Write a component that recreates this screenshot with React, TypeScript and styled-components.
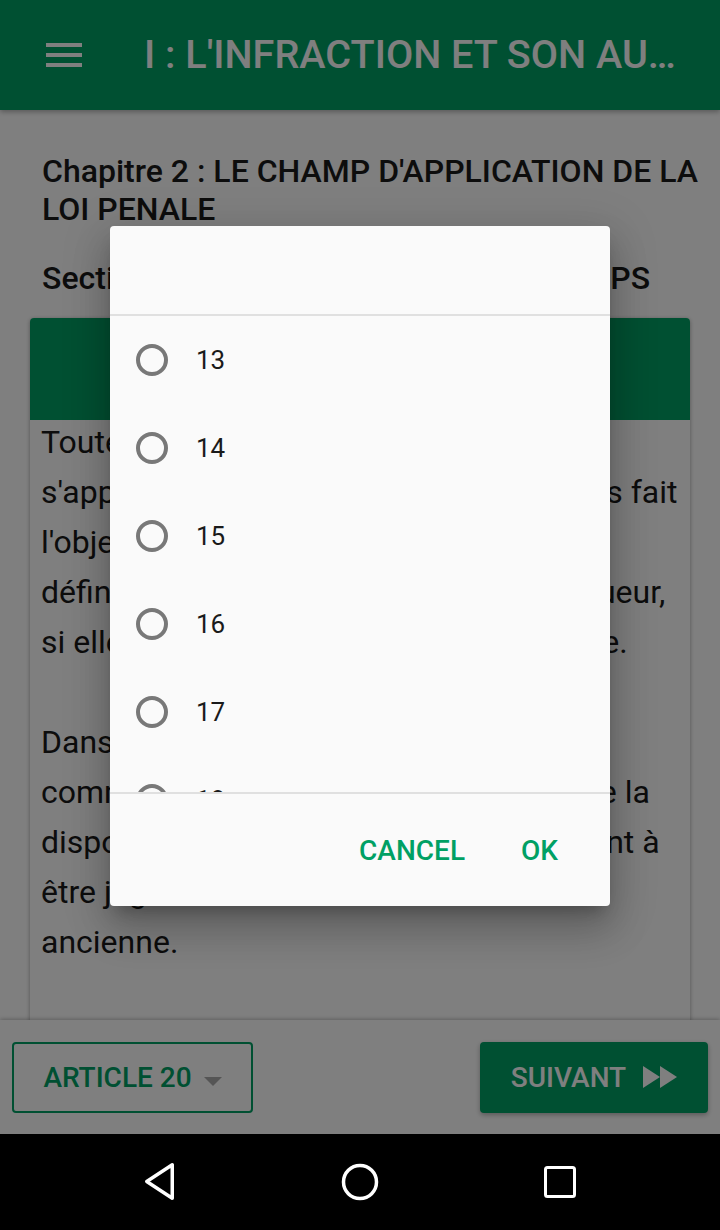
import React from "react";
import styled, { createGlobalStyle } from "styled-components";

const GlobalStyle = createGlobalStyle`
  html, body {
    margin: 0;
    padding: 0;
    background: #000;
  }
  * {
    box-sizing: border-box;
  }
`;

const GREEN = "#00a064";

const Screen = styled.div`
  position: relative;
  width: 720px;
  height: 1230px;
  display: flex;
  flex-direction: column;
  background: #fff;
  overflow: hidden;
  font-family: Roboto, "Noto Sans", Arial, sans-serif;
`;

const AppBar = styled.header`
  position: relative;
  z-index: 2;
  flex-shrink: 0;
  height: 110px;
  display: flex;
  align-items: center;
  gap: 62px;
  padding-left: 46px;
  background: ${GREEN};
  box-shadow: 0 2px 5px rgba(0, 0, 0, 0.3);
`;

const AppTitle = styled.h1`
  margin: -1px 0 0;
  color: #fff;
  font-size: 39.6px;
  font-weight: 500;
  white-space: nowrap;
`;

const Content = styled.main`
  flex: 1;
  min-height: 0;
  overflow: hidden;
  padding: 42px 30px 0;
`;

const Heading = styled.h2<{ $gap?: number }>`
  margin: ${(p) => p.$gap ?? 0}px -18px 0 0;
  padding-left: 12px;
  color: #1a1a1a;
  font-size: 32px;
  font-weight: 500;
  line-height: 38px;
`;

const Card = styled.section`
  margin-top: 21px;
  background: #fff;
  border-radius: 4px;
  overflow: hidden;
  box-shadow: 0 1px 4px rgba(0, 0, 0, 0.35);
`;

const CardHeader = styled.div`
  height: 102px;
  background: ${GREEN};
`;

const CardBody = styled.div`
  margin-top: -3px;
  padding: 0 11px 80px;
  color: #1a1a1a;
  font-size: 32px;
  line-height: 50px;
`;

const Line = styled.div`
  min-height: 50px;
  white-space: nowrap;
`;

const BottomBar = styled.footer`
  position: relative;
  z-index: 2;
  flex-shrink: 0;
  height: 114px;
  display: flex;
  align-items: center;
  justify-content: space-between;
  padding: 0 12px;
  background: #fff;
  box-shadow: 0 -1px 4px rgba(0, 0, 0, 0.25);
`;

const BarButton = styled.button<{ $filled?: boolean }>`
  height: 71px;
  width: ${(p) => (p.$filled ? 228 : 241)}px;
  display: flex;
  align-items: center;
  justify-content: center;
  gap: ${(p) => (p.$filled ? 17 : 12)}px;
  padding: 0;
  border-radius: 4px;
  border: 2px solid ${GREEN};
  background: ${(p) => (p.$filled ? GREEN : "transparent")};
  color: ${(p) => (p.$filled ? "#fff" : GREEN)};
  box-shadow: ${(p) => (p.$filled ? "0 2px 5px rgba(0,0,0,0.3)" : "none")};
  font-family: inherit;
  font-size: 28px;
  font-weight: 500;
`;

const NavBar = styled.nav`
  flex-shrink: 0;
  height: 96px;
  display: grid;
  grid-template-columns: repeat(3, 200px);
  justify-content: center;
  align-items: center;
  justify-items: center;
  background: #000;
`;

const Scrim = styled.div`
  position: absolute;
  top: 0;
  left: 0;
  z-index: 5;
  width: 720px;
  height: 1134px;
  display: flex;
  align-items: center;
  justify-content: center;
  padding-bottom: 2px;
  background: rgba(0, 0, 0, 0.5);
`;

const Dialog = styled.div`
  width: 500px;
  height: 680px;
  display: flex;
  flex-direction: column;
  background: #fafafa;
  border-radius: 4px;
  overflow: hidden;
  box-shadow: 0 24px 38px 3px rgba(0, 0, 0, 0.16),
    0 9px 46px 8px rgba(0, 0, 0, 0.12), 0 11px 15px -7px rgba(0, 0, 0, 0.25);
`;

const DialogTitle = styled.div`
  height: 90px;
  flex-shrink: 0;
  border-bottom: 2px solid #e0e0e0;
`;

const OptionList = styled.div`
  height: 478px;
  flex-shrink: 0;
  overflow: hidden;
  border-bottom: 2px solid #e0e0e0;
`;

const Option = styled.label`
  height: 88px;
  display: flex;
  align-items: center;
  gap: 28px;
  padding-left: 26px;
  color: #1a1a1a;
  font-size: 26px;
`;

const Radio = styled.span`
  width: 32px;
  height: 32px;
  flex-shrink: 0;
  border-radius: 50%;
  border: 4px solid #787878;
`;

const Actions = styled.div`
  flex: 1;
  display: flex;
  align-items: center;
  justify-content: flex-end;
  gap: 56px;
  padding: 0 52px 0 0;
`;

const ActionButton = styled.button`
  padding: 0;
  border: none;
  background: none;
  color: ${GREEN};
  font-family: inherit;
  font-size: 28px;
  font-weight: 500;
`;

const MenuIcon = () => (
  <svg width="36" height="24" viewBox="0 0 36 24">
    <rect x="0" y="0" width="36" height="4" fill="#fff" />
    <rect x="0" y="10" width="36" height="4" fill="#fff" />
    <rect x="0" y="20" width="36" height="4" fill="#fff" />
  </svg>
);

const Caret = () => (
  <svg width="18" height="9" viewBox="0 0 18 9" style={{ marginTop: 8 }}>
    <polygon points="0,0 18,0 9,9" fill="#aaaaaa" />
  </svg>
);

const FastForward = () => (
  <svg width="34" height="22" viewBox="0 0 34 22">
    <polygon points="0,0 17,11 0,22" fill="#fff" />
    <polygon points="17,0 34,11 17,22" fill="#fff" />
  </svg>
);

const BackIcon = () => (
  <svg width="34" height="42" viewBox="0 0 34 42">
    <polygon
      points="3.75,20.5 29.25,3.75 29.25,37.25"
      fill="none"
      stroke="#fff"
      strokeWidth="3.5"
      strokeLinejoin="round"
    />
  </svg>
);

const HomeIcon = () => (
  <svg width="40" height="40" viewBox="0 0 40 40">
    <circle cx="20" cy="20" r="16.5" fill="none" stroke="#fff" strokeWidth="3.5" />
  </svg>
);

const RecentsIcon = () => (
  <svg width="36" height="36" viewBox="0 0 36 36">
    <rect x="3.5" y="3.5" width="29" height="29" rx="2" fill="none" stroke="#fff" strokeWidth="3" />
  </svg>
);

const articleLines = [
  "Toute disposition nouvelle plus douce",
  "s'appliquera aux infractions, qui n'ont pas fait",
  "l'objet d'une condamnation",
  "définitive, à la date de son entrée en vigueur,",
  "si elle est moins rigide que la précédente.",
  "",
  "Dans le cas contraire, les faits",
  "commises antérieurement à l'édiction de la",
  "disposition législative nouvelle continuent à",
  "être jugées selon la loi",
  "ancienne.",
];

const options = ["13", "14", "15", "16", "17", "18"];

export default function App() {
  return (
    <>
      <GlobalStyle />
      <Screen>
        <AppBar>
          <MenuIcon />
          <AppTitle>I : L'INFRACTION ET SON AU…</AppTitle>
        </AppBar>

        <Content>
          <Heading>Chapitre 2 : LE CHAMP D'APPLICATION DE LA LOI PENALE</Heading>
          <Heading $gap={31}>Section 1 : APPLICATION DANS LE TEMPS</Heading>
          <Card>
            <CardHeader />
            <CardBody>
              {articleLines.map((line, i) => (
                <Line key={i}>{line}</Line>
              ))}
            </CardBody>
          </Card>
        </Content>

        <BottomBar>
          <BarButton>
            ARTICLE 20
            <Caret />
          </BarButton>
          <BarButton $filled>
            SUIVANT
            <FastForward />
          </BarButton>
        </BottomBar>

        <NavBar>
          <BackIcon />
          <HomeIcon />
          <RecentsIcon />
        </NavBar>

        <Scrim>
          <Dialog>
            <DialogTitle />
            <OptionList>
              {options.map((n) => (
                <Option key={n}>
                  <Radio />
                  {n}
                </Option>
              ))}
            </OptionList>
            <Actions>
              <ActionButton>CANCEL</ActionButton>
              <ActionButton>OK</ActionButton>
            </Actions>
          </Dialog>
        </Scrim>
      </Screen>
    </>
  );
}
